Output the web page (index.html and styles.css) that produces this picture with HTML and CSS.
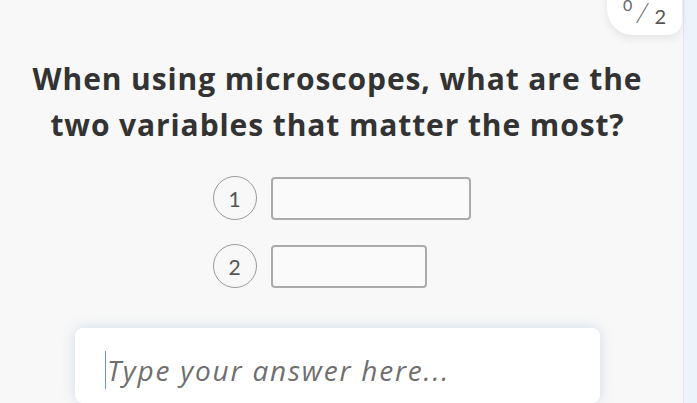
FILE: index.html
```html
<!DOCTYPE html>
<html>
<head>
<meta charset="utf-8">
<link rel="stylesheet" href="styles.css">
</head>
<body>
<div class="app">
  <main class="panel">
    <div class="counter"><sup class="done">0</sup><span class="slash">/</span><span class="total">2</span></div>
    <h1 class="question">When using microscopes, what are the<br>two variables that matter the most?</h1>
    <div class="blanks">
      <div class="row"><span class="num">1</span><span class="slot slot-wide"></span></div>
      <div class="row"><span class="num">2</span><span class="slot slot-narrow"></span></div>
    </div>
    <div class="answer"><span class="caret"></span><span class="placeholder">Type your answer here...</span></div>
  </main>
  <aside class="side"></aside>
</div>
</body>
</html>
```
FILE: styles.css
```css
html, body { margin: 0; padding: 0; }
body { width: 697px; height: 403px; overflow: hidden; background: #edf3fa; font-family: "Open Sans", "Lato", sans-serif; }
.app { display: flex; height: 403px; }
.panel { width: 683px; background: #f8f8f8; border-right: 1px solid #e3e6ea; position: relative; display: flex; flex-direction: column; align-items: center; }
.side { flex: 1; background: #edf3fa; }
.counter { position: absolute; right: 1px; top: -14px; width: 75px; height: 49px; background: #fff; border-radius: 0 0 14px 26px; box-shadow: 0 4px 8px rgba(0,0,0,0.08); display: flex; align-items: flex-end; justify-content: center; padding-bottom: 9px; box-sizing: border-box; color: #555; font-family: "Lato", sans-serif; }
.done { font-size: 16px; position: relative; top: -12px; margin-right: 5px; color: #666; }
.slash { font-size: 26px; font-weight: 300; transform: skewX(-10deg); line-height: 1; margin-bottom: 1px; }
.total { font-size: 20px; margin-left: 6px; line-height: 1; }
.question { margin: 56px 0 0; font-size: 30px; font-weight: 700; line-height: 46px; text-align: center; color: #333; letter-spacing: 0.9px; margin-left: -8px; }
.blanks { display: flex; flex-direction: column; gap: 24px; margin-top: 28px; width: 260px; margin-left: 2px; }
.row { display: flex; align-items: center; gap: 14px; }
.num { width: 44px; height: 44px; border: 1px solid #9a9a9a; border-radius: 50%; display: flex; align-items: center; justify-content: center; font-size: 21px; color: #555; box-sizing: border-box; font-family: "Lato", sans-serif; }
.slot { height: 43px; border: 2px solid #ababab; border-radius: 4px; background: #fafafa; box-sizing: border-box; }
.slot-wide { width: 200px; }
.slot-narrow { width: 156px; }
.answer { margin-top: 40px; margin-left: -8px; width: 525px; height: 90px; background: #fff; border-radius: 8px; box-shadow: 0 0 14px rgba(110,150,190,0.28); display: flex; align-items: flex-start; padding: 23px 0 0 30px; box-sizing: border-box; }
.caret { width: 1px; height: 38px; background: #6b9aa8; margin-right: 1px; }
.placeholder { font-size: 28px; font-style: italic; font-weight: 400; color: #6f6f6f; line-height: 38px; letter-spacing: 1.8px; }
```
